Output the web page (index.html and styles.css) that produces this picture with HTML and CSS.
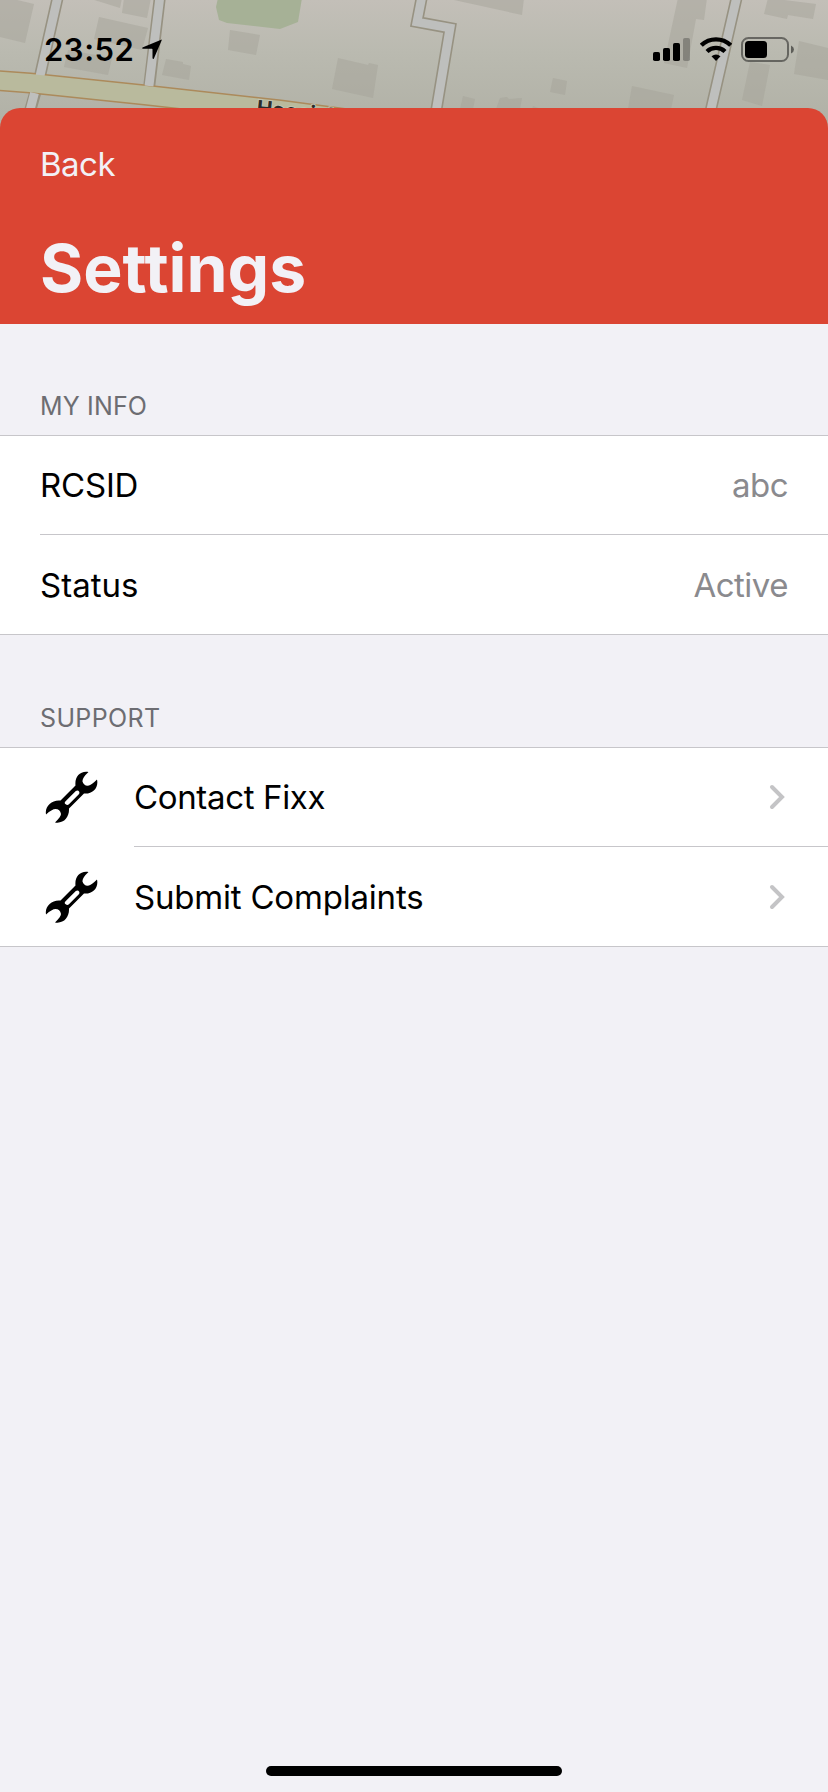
FILE: index.html
```html
<!DOCTYPE html>
<html lang="en">
<head>
<meta charset="utf-8">
<title>Settings</title>
<link rel="stylesheet" href="styles.css">
</head>
<body>
<div class="screen">
  <header class="status-bar">
    <svg class="map" width="828" height="130" viewBox="0 0 828 130" aria-hidden="true">
      <defs>
        <linearGradient id="land" x1="0" y1="0" x2="0" y2="1">
          <stop offset="0" stop-color="#c3bfb8"/>
          <stop offset=".4" stop-color="#babab0"/>
          <stop offset="1" stop-color="#b0b0a5"/>
        </linearGradient>
      </defs>
      <rect width="828" height="130" fill="url(#land)"/>
      <path class="building" d="M0-4 34 4 25 43 0 37zM88-2 120 8 122-2zM124-2 122 13 147 18 151-2zM99 17 148 28 142 50 94 39zM68 50 112 58 108 75 64 67zM230 30 260 35 256 55 228 50zM166 59 183 62 183 64 191 66 189 80 162 75zM338 58 368 65 369 63 378 65 373 98 332 89zM445-2 524-2 522 15zM463 96 475 99 473 109 460 109zM500 98 507 97 509 99 522 98 520 109 496 109zM533 106 541 109H532zM678-2H707L704 20 696 19 687 68 664 63zM768-2 816 4 813 19 788 15 787 19 764 14zM799 41 828 48V80L794 74zM750 62 770 65 762 106 742 100zM553 78 567 81 565 95 550 92zM632 86 674 95 671 109H628z"/>
      <path class="park" d="M218-2 216 7 219 20 227 23 280 29 298 22 302-2z"/>
      <path class="casing" d="M58-4 40 76 28 118M160-4 149 88M422-4 417 22 450 28 435 118M737-4 709 118"/>
      <path class="avenue-edge" d="M-4 80.500 30 83 145 95 280 110 400 126"/>
      <path class="road" d="M58-4 40 76M34.500 93 28 118M160-4 149 86M422-4 417 22 450 28 435 118M737-4 709 118"/>
      <path class="avenue" d="M-4 80.500 30 83 145 95 280 110 400 126"/>
      <text class="street" x="256" y="115" transform="rotate(6 256 115)">Hoosick Street</text>
    </svg>
    <div class="clock">23:52</div>
    <svg class="locate" width="22" height="22" viewBox="0 0 22 22"><path d="M20.200.7Q21 .3 20.700 1.300L13 19.200Q12 21 11.500 19V10.500Q11.500 9.800 10.800 9.800H2Q.2 9.200 2 8.300z"/></svg>
    <div class="indicators">
      <svg width="38" height="24" viewBox="0 0 38 24"><rect x="0" y="15" width="7" height="9" rx="1.800"/><rect x="10" y="11" width="7" height="13" rx="1.800"/><rect x="20" y="6" width="7" height="18" rx="1.800"/><rect x="30" y="1" width="7" height="23" rx="1.800" opacity=".25"/></svg>
      <svg class="wifi" width="32" height="24" viewBox="0 0 32 24"><path class="arc" d="M1.300 8.300a21 21 0 0 1 29.400 0M7 14.500a13 13 0 0 1 18 0"/><path d="M11.500 19.200Q16 15.800 20.500 19.200L16 24z"/></svg>
      <svg class="battery" width="54" height="26" viewBox="0 0 54 26"><rect x="1" y="1" width="46" height="23" rx="6.500" fill="none" stroke="#000" stroke-opacity=".45" stroke-width="2"/><rect x="4" y="4" width="22" height="17" rx="3.500"/><path d="M50 8.500q3 1.300 3 4t-3 4z" opacity=".5"/></svg>
    </div>
  </header>
  <main class="sheet">
    <div class="navbar">
      <a class="back">Back</a>
      <h1 class="title">Settings</h1>
    </div>
    <h2 class="section-label">MY INFO</h2>
    <section class="group">
      <div class="row"><div class="cell"><span>RCSID</span><span class="value">abc</span></div></div>
      <div class="row"><div class="cell"><span class="label-status">Status</span><span class="value">Active</span></div></div>
    </section>
    <h2 class="section-label support">SUPPORT</h2>
    <section class="group">
      <div class="row">
        <svg class="wrench" width="54" height="54" viewBox="0 0 54 54"><use href="#wrench"/></svg>
        <div class="cell"><span class="label-contact">Contact Fixx</span><svg class="chevron" width="16" height="26" viewBox="0 0 16 26"><path d="M3 3 13 13 3 23"/></svg></div>
      </div>
      <div class="row">
        <svg class="wrench" width="54" height="54" viewBox="0 0 54 54"><use href="#wrench"/></svg>
        <div class="cell"><span>Submit Complaints</span><svg class="chevron" width="16" height="26" viewBox="0 0 16 26"><path d="M3 3 13 13 3 23"/></svg></div>
      </div>
    </section>
    <div class="home-indicator"></div>
  </main>
</div>
<svg class="symbols" width="0" height="0"><defs><path id="wrench" fill-rule="evenodd" d="M43.500 2 Q37 8 37.500 11.500 Q39 16.500 44 15.500 Q47 14.500 52 9.500 C54 18 47 24.500 39 23.500 L24 38.500 C24.500 47 19 54 10 52.500 Q16 46.500 16 44 Q15 39 10.500 39 Q7 39 1 44.500 C-.5 36 7 29.500 15.500 30.500 L30.500 15.500 C29.500 7 35 .5 43.500 2zM20.800 31 Q19.200 32.400 20 33.800 Q22 36 24.200 34 L33.600 24.600 Q34.800 23.400 34.200 21.800 Q33 19.500 30.800 21z"/></defs></svg>
</body>
</html>
```
FILE: styles.css
```css
* { box-sizing: border-box; }
body { margin: 0; background: #f2f1f6; font-family: Inter, "Liberation Sans", sans-serif; color: #000; }
.screen { position: relative; width: 828px; height: 1792px; display: flex; flex-direction: column; overflow: hidden; }
.status-bar { position: relative; height: 108px; flex: none; display: flex; padding: 0 33px 0 44px; }
.map { position: absolute; left: 0; top: 0; }
.clock { position: relative; width: 97px; padding-top: 32px; font-size: 31px; font-weight: 600; line-height: 36px; letter-spacing: .55px; white-space: nowrap; }
.locate { position: relative; margin-top: 39px; }
.indicators { position: relative; margin-left: auto; display: flex; padding-top: 37px; }
.wifi { margin-left: 9px; }
.arc { fill: none; stroke: #000; stroke-width: 4.300; }
.battery { margin-left: 9px; }
.building { fill: #a5a499; opacity: .5; }
.park { fill: #a6b196; }
.casing { fill: none; stroke: #979282; stroke-width: 12; }
.road { fill: none; stroke: #bebfbd; stroke-width: 8.800; }
.avenue-edge { fill: none; stroke: #ac8a5b; stroke-width: 21; }
.avenue { fill: none; stroke: #b9ba9d; stroke-width: 18; }
.street { font: 700 21px Inter, sans-serif; fill: #2c2c2b; stroke: #c2c3b0; stroke-width: 2px; paint-order: stroke; }
.sheet { position: relative; flex: 1; display: flex; flex-direction: column; }
/* the sheet's top corners show the map behind them */
.navbar { height: 216px; padding: 36px 40px 0; border-radius: 20px 20px 0 0; background: #db4533; color: #f2f1f6; }
.back { display: block; font-size: 33px; line-height: 40px; letter-spacing: -.5px; }
.title { margin: 44px 0 0; font-size: 66px; font-weight: 700; line-height: 80px; }
.section-label { height: 111px; margin: 0; padding: 66px 40px 0; color: #6d6d72; font-size: 25px; font-weight: 400; line-height: 32px; letter-spacing: .15px; }
.support { height: 112px; padding-top: 67px; letter-spacing: .35px; }
.group { height: 200px; border: solid #c7c6ca; border-width: 1px 0; background: #fff; }
.row { display: flex; height: 99px; padding-left: 40px; font-size: 33px; letter-spacing: -.2px; }
.cell { flex: 1; display: flex; align-items: center; justify-content: space-between; padding-right: 40px; }
.row:first-child .cell { border-bottom: 1px solid #c7c6ca; }
.row:last-child { padding-top: 1px; }
.label-status { letter-spacing: 0; }
.label-contact { letter-spacing: -.35px; }
.value { color: #8a8a8e; letter-spacing: -.5px; }
.wrench { margin: 22px 35px 0 5px; }
.chevron { margin-right: 3px; fill: none; stroke: #c4c4c6; stroke-width: 4; stroke-linecap: round; }
.home-indicator { width: 296px; height: 10px; margin: auto auto 16px; border-radius: 5px; background: #000; }
.symbols { position: absolute; }
```
